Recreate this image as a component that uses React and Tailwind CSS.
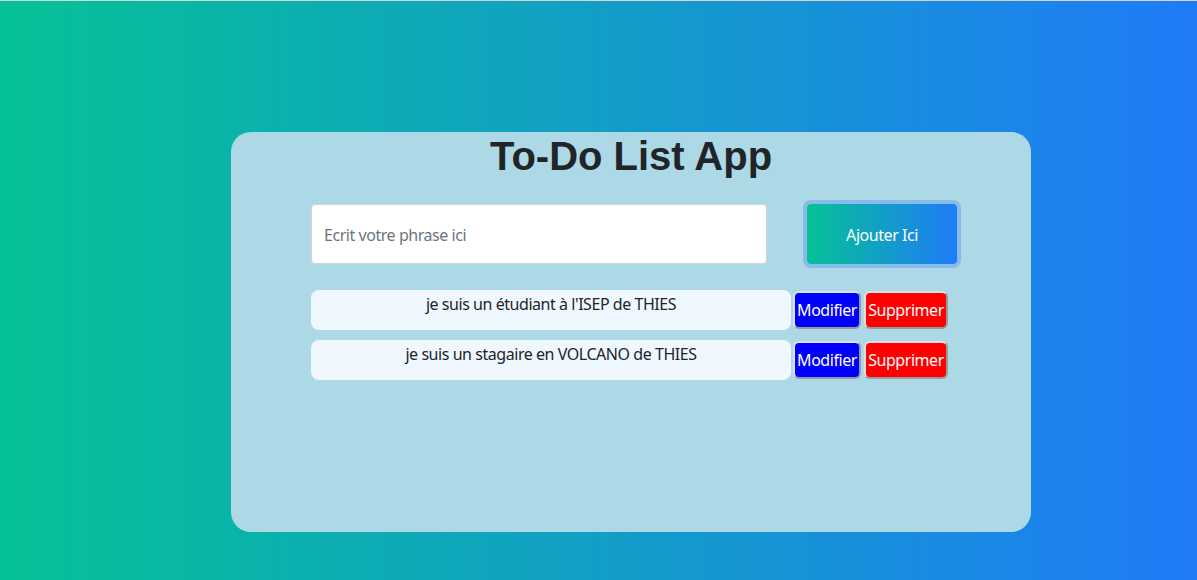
import { useState } from 'react';

const INITIAL = [
  "je suis un étudiant à l'ISEP de THIES",
  'je suis un stagaire en VOLCANO de THIES',
];

export default function App() {
  const [todos, setTodos] = useState(INITIAL);
  const [text, setText] = useState('');

  const add = () => {
    if (!text.trim()) return;
    setTodos(t => [...t, text]);
    setText('');
  };

  return (
    <div className="min-h-screen border-t border-[#d4d4d4] bg-[linear-gradient(to_right,#05c296,#1f7bf7)] pt-[131px] pb-[48px] font-['Segoe_UI','Noto_Sans',sans-serif] tracking-[-0.45px]">
      <div className="ml-[231px] h-[400px] w-[800px] rounded-[20px] bg-[#add8e6] pl-[80px]">
        {/* Title */}
        <h1 className="pr-[80px] text-center font-['Liberation_Sans',Arial,sans-serif] text-[40px] font-bold leading-[48px] tracking-normal text-[#212529]">
          To-Do List App
        </h1>

        {/* Input row */}
        <div className="mt-[24px] flex items-center gap-[40px]">
          <input
            value={text}
            onChange={e => setText(e.target.value)}
            placeholder="Ecrit votre phrase ici"
            className="h-[60px] w-[456px] rounded-[4px] border border-[#ced4da] bg-white px-[12px] pt-[2px] text-[16px] text-[#212529] placeholder:text-[#6c757d] outline-none"
          />
          <button
            onClick={add}
            className="h-[60px] w-[150px] rounded-[4px] bg-[linear-gradient(to_right,#05c296,#1f7bf7)] pt-[2px] text-[16px] text-white ring-4 ring-[#86bbec]"
          >
            Ajouter Ici
          </button>
        </div>

        {/* Todo list */}
        <div className="mt-[26px] flex flex-col gap-[10px]">
          {todos.map((todo, i) => (
            <div key={i} className="flex items-start">
              <div className="h-[40px] w-[480px] rounded-[8px] bg-[#f0f8ff] pt-[4px] text-center text-[16px] leading-[20px] text-[#212529]">
                {todo}
              </div>
              <button className="ml-[2px] mt-[1px] h-[38px] w-[68px] rounded-[6px] border-2 border-t-[#e0e0e0] border-l-[#e0e0e0] border-r-[#9a9a9a] border-b-[#9a9a9a] bg-[#0000ff] text-[16px] text-white">
                Modifier
              </button>
              <button
                onClick={() => setTodos(t => t.filter((_, j) => j !== i))}
                className="ml-[3px] mt-[1px] h-[38px] w-[84px] rounded-[6px] border-2 border-t-[#e0e0e0] border-l-[#e0e0e0] border-r-[#9a9a9a] border-b-[#9a9a9a] bg-[#ff0000] text-[16px] text-white"
              >
                Supprimer
              </button>
            </div>
          ))}
        </div>
      </div>
    </div>
  );
}
